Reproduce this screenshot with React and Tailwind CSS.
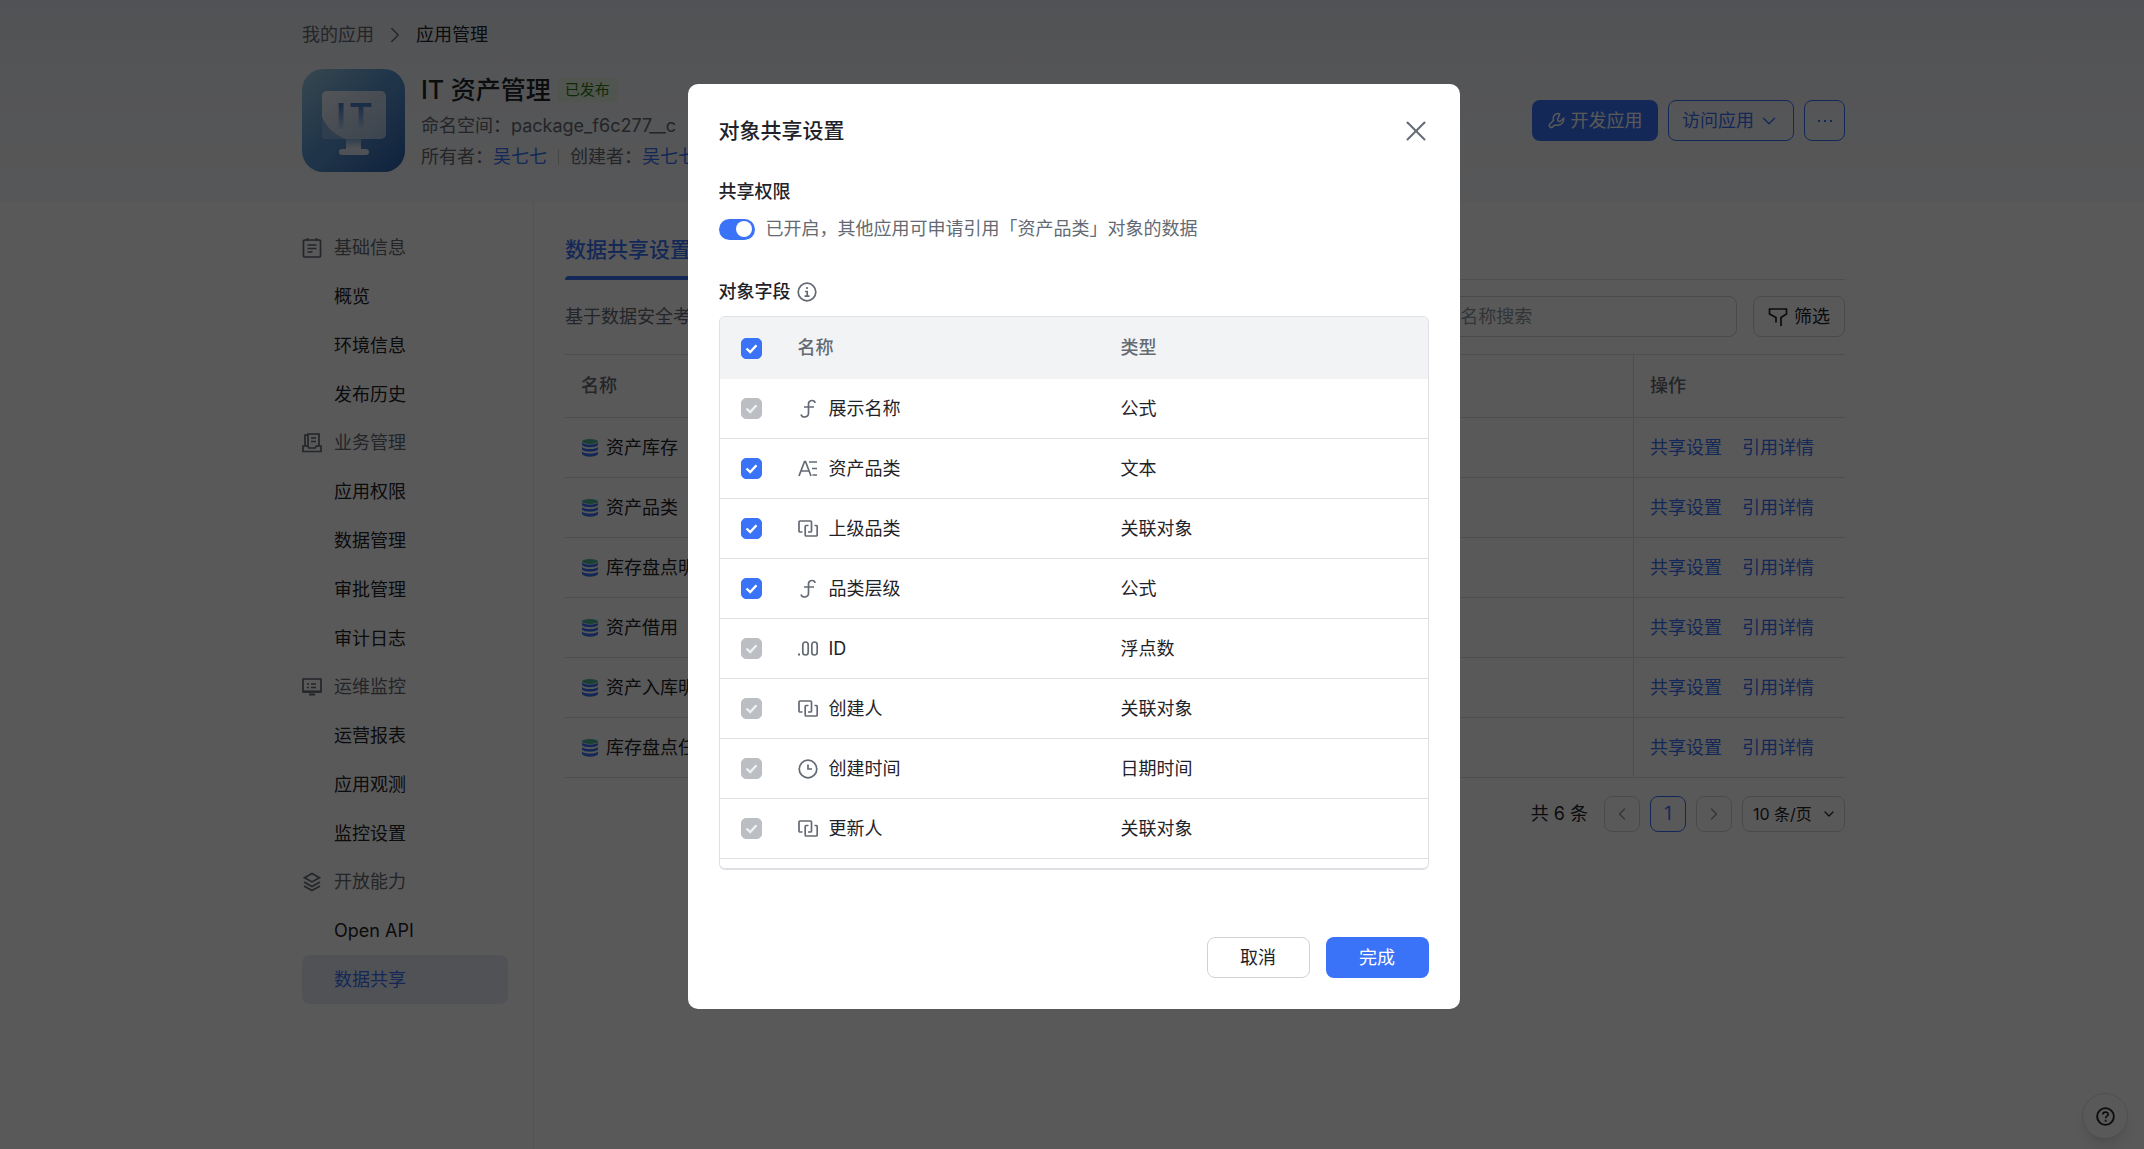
import { useState } from "react";
import { ChevronDown, ChevronLeft, ChevronRight, Search, X } from "lucide-react";

const menuGroups = [
  { title: "基础信息", icon: "note", items: ["概览", "环境信息", "发布历史"] },
  { title: "业务管理", icon: "tray", items: ["应用权限", "数据管理", "审批管理", "审计日志"] },
  { title: "运维监控", icon: "monitor", items: ["运营报表", "应用观测", "监控设置"] },
  { title: "开放能力", icon: "layers", items: ["Open API", "数据共享"] }
];

const sharedObjects = ["资产库存", "资产品类", "库存盘点明细", "资产借用", "资产入库明细", "库存盘点任务"];

const objectFields = [
  { name: "展示名称", type: "公式", icon: "formula", locked: true },
  { name: "资产品类", type: "文本", icon: "text", locked: false },
  { name: "上级品类", type: "关联对象", icon: "relation", locked: false },
  { name: "品类层级", type: "公式", icon: "formula", locked: false },
  { name: "ID", type: "浮点数", icon: "decimal", locked: true },
  { name: "创建人", type: "关联对象", icon: "relation", locked: true },
  { name: "创建时间", type: "日期时间", icon: "clock", locked: true },
  { name: "更新人", type: "关联对象", icon: "relation", locked: true }
];

const iconShapes = {
  note: (
    <>
      <rect x="1.500" y="2" width="17" height="17" rx="1" />
      <path d="M5.500 0v3M14.500 0v3M5.500 7h9M5.500 10.500h9M5.500 14h5" />
    </>
  ),
  tray: (
    <>
      <path d="M3 13V2h3M6 13V1h11v12M9 5h5M9 8.500h5" />
      <path d="M1 13h4.500l1.500 2h6l1.500-2H19v5.500H1z" />
    </>
  ),
  monitor: (
    <>
      <path d="M1 2h18v13H1z" />
      <path d="M1 14.500h18M7 17.500h6" strokeWidth="2" />
      <path d="M5 7h2M9 7h5M5 10.500h2M9 10.500h5" />
    </>
  ),
  layers: <path d="M10 1.500l7.500 4.200-7.500 4.200-7.500-4.200zM2 10l8 4.500 8-4.500M2 14l8 4.500 8-4.500" />,
  formula: <path d="M17 4c0-3.500-6.500-3.500-6.500 1v9c0 5-6.500 5-7.500 1.500M6 8h10" />,
  text: <path d="M1 17L6.500 2.500h1L13 17M3 12h8M11 3h8M14 9.500h5M14.500 16h4.500" />,
  relation: (
    <>
      <path d="M4.500 13H2a1 1 0 0 1-1-1V3a1 1 0 0 1 1-1h10.500a1 1 0 0 1 1 1v9a1 1 0 0 1-1 1H10" />
      <path d="M10.500 6.500H8.200a1 1 0 0 0-1 1V16a1 1 0 0 0 1 1h10a1 1 0 0 0 1-1V7.500a1 1 0 0 0-1-1h-1.700" />
    </>
  ),
  decimal: (
    <>
      <rect x="4.800" y="3" width="5.400" height="13" rx="2.700" />
      <rect x="13.800" y="3" width="5.400" height="13" rx="2.700" />
      <path d="M0 15.500h2" strokeWidth="2" />
    </>
  ),
  clock: (
    <>
      <circle cx="10" cy="10" r="8.800" />
      <path d="M10 5.500V10h4" />
    </>
  ),
  info: (
    <>
      <circle cx="10" cy="10" r="8.800" />
      <path d="M10 5v2M8 9.500h2.200V14M7.500 14.200h5" />
    </>
  ),
  help: (
    <>
      <circle cx="10" cy="10" r="8.800" strokeWidth="2" />
      <path d="M7.200 8c0-3.600 5.800-3.400 5.600-.2-.1 1.800-2.700 1.900-2.700 4M10.100 13.500v2" />
    </>
  ),
  filter: <path d="M8 15.500v-5L1.500 7V2h17v5L13 10.500V19" />,
  wrench: <path d="M13.800 2.200c-3.300-1.200-7 .7-7.600 4.300-.2 1.200 0 2.300.4 3.300l-4.400 4.300c-1 1-1 2.500 0 3.400 1 .9 2.400.9 3.300 0l2-2h3.600c4.300 0 7.800-3.400 7.400-8.200l-3.300 3.100c-1 .9-2.400.9-3.300 0-.9-.9-.9-2.300 0-3.200z" />
};

function Icon({ name, className }) {
  return (
    <svg viewBox="0 0 20 20" fill="none" stroke="currentColor" strokeWidth="1.700" className={className} aria-hidden="true">
      {iconShapes[name]}
    </svg>
  );
}

function DatabaseIcon() {
  return (
    <svg viewBox="0 0 16 18" className="h-[18px] w-4 shrink-0" aria-hidden="true">
      <path d="M0 3.500c2 2.800 14 2.800 16 0V6c-2 3-14 3-16 0z" fill="#3b73f8" />
      <path d="M0 8c2 2.800 14 2.800 16 0v2.500c-2 3-14 3-16 0z" fill="#3b73f8" />
      <path d="M0 12.500c2 2.800 14 2.800 16 0V15c-2 3.500-14 3.500-16 0z" fill="#3b73f8" />
      <ellipse cx="8" cy="2.500" rx="8" ry="2.500" fill="#4fb59a" />
    </svg>
  );
}

function AppLogo() {
  return (
    <svg viewBox="0 0 103 103" className="size-[103px] shrink-0" role="img" aria-label="IT 资产管理">
      <defs>
        <linearGradient id="tile" x1="0" y1="0" x2="1" y2="1">
          <stop offset="0" stopColor="#a0cde0" />
          <stop offset="0.4" stopColor="#659fd8" />
          <stop offset="1" stopColor="#2c62ad" />
        </linearGradient>
        <linearGradient id="screen" x1="0" y1="0" x2="1" y2="1">
          <stop offset="0" stopColor="#eef3f7" />
          <stop offset="1" stopColor="#a9c4e4" />
        </linearGradient>
        <linearGradient id="letters" x1="0" y1="0" x2="0" y2="1">
          <stop offset="0.2" stopColor="#4778cc" />
          <stop offset="0.8" stopColor="#b5d5ec" />
        </linearGradient>
        <linearGradient id="stand" x1="0" y1="0" x2="0" y2="1">
          <stop offset="0" stopColor="#8db4de" />
          <stop offset="1" stopColor="#e6eef6" />
        </linearGradient>
      </defs>
      <rect width="103" height="103" rx="21" fill="url(#tile)" />
      <rect x="20" y="22" width="64" height="48" rx="5" fill="url(#screen)" />
      <path d="M20 47c3 10 11 18 24 23H25a5 5 0 0 1-5-5z" fill="#86afdc" />
      <text y="60" textAnchor="middle" fontFamily="Inter, sans-serif" fontWeight="600" fontSize="36" fill="url(#letters)">
        <tspan x="39">I</tspan>
        <tspan x="59">T</tspan>
      </text>
      <path d="M44 70h15v10H44z" fill="url(#stand)" />
      <rect x="37" y="80" width="30" height="6" rx="3" fill="#dfe9f3" />
    </svg>
  );
}

function Checkbox({ label, checked, disabled = false, onChange }) {
  return (
    <span className="grid size-[21px] place-items-center">
      <input
        type="checkbox"
        aria-label={label}
        checked={checked}
        disabled={disabled}
        onChange={onChange}
        className="col-start-1 row-start-1 size-[21px] appearance-none rounded-[5px] border border-[#bbbfc4] checked:border-[#3b73f8] checked:bg-[#3b73f8] disabled:border-[#bbbfc4] disabled:bg-[#bbbfc4]"
      />
      {checked && (
        <svg viewBox="0 0 21 21" fill="none" strokeWidth="2.400" className={disabled ? "pointer-events-none col-start-1 row-start-1 size-[21px] stroke-[#eff0f1]" : "pointer-events-none col-start-1 row-start-1 size-[21px] stroke-white"}>
          <path d="M5.500 10.500l3.700 3.500 6.300-6.800" />
        </svg>
      )}
    </span>
  );
}

function PageHeader() {
  return (
    <header className="h-[202px] bg-linear-to-b from-[#e8ebf2] via-[#f1f3f7] via-40% to-[#f8f9fc] pl-[3px]">
      <div className="mx-auto max-w-[1543px]">
        <nav className="flex h-[69px] items-center gap-2">
          <a href="#apps" className="text-[#646a73]">我的应用</a>
          <ChevronRight className="size-[26px] text-[#646a73]" strokeWidth={1.3} />
          <span>应用管理</span>
        </nav>
        <div className="flex gap-4">
          <AppLogo />
          <div className="flex-1">
            <div className="flex h-[41px] items-center gap-[6px]">
              <h1 className="text-[25px] font-medium">IT 资产管理</h1>
              <span className="rounded-sm bg-[#e6f2e1] px-2 text-[15px] leading-6 text-[#2f7a10]">已发布</span>
            </div>
            <p className="leading-[31px] text-[#646a73]">命名空间：package_f6c277__c</p>
            <p className="flex items-center leading-[31px] text-[#646a73]">
              所有者：<a href="#owner" className="text-[#3b73f8]">吴七七</a>
              <span className="mx-[11px] h-4 w-px bg-[#c5c8ce]" />
              创建者：<a href="#creator" className="text-[#3b73f8]">吴七七</a>
            </p>
          </div>
          <div className="flex gap-[10px] pt-[31px]">
            <button className="flex h-[41px] w-[126px] items-center justify-center gap-[6px] rounded-lg bg-[#3b73f8] text-white">
              <Icon name="wrench" className="size-[17px]" />
              开发应用
            </button>
            <button className="flex h-[41px] w-[126px] items-center justify-center gap-1 rounded-lg border border-[#3b73f8] text-[#3b73f8]">
              访问应用
              <ChevronDown className="size-[22px]" strokeWidth={1.5} />
            </button>
            <button className="flex size-[41px] items-center justify-center gap-1 rounded-lg border border-[#3b73f8]" aria-label="更多">
              <span className="size-[2px] bg-[#3b73f8]" />
              <span className="size-[2px] bg-[#3b73f8]" />
              <span className="size-[2px] bg-[#3b73f8]" />
            </button>
          </div>
        </div>
      </div>
    </header>
  );
}

function Sidebar() {
  return (
    <aside className="w-[232px] shrink-0 border-r border-[#eceded] pt-[22px] pr-[25px]">
      {menuGroups.map((group) => (
        <section key={group.title}>
          <h2 className="flex h-12 items-center gap-3 text-[#646a73]">
            <Icon name={group.icon} className="size-5" />
            {group.title}
          </h2>
          {group.items.map((item) => (
            <a
              key={item}
              href="#menu"
              className={item === "数据共享" ? "flex h-[49px] items-center rounded-lg bg-[#e7ebf7] pl-8 text-[#3b73f8]" : "flex h-[49px] items-center rounded-lg pl-8"}
            >
              {item}
            </a>
          ))}
        </section>
      ))}
    </aside>
  );
}

function SharedObjects() {
  return (
    <main className="flex-1 pl-[31px]">
      <div className="flex h-[78px] border-b border-[#dee0e3] pt-5">
        <button className="flex h-[58px] flex-col justify-between text-[21px] font-medium text-[#3b73f8]">
          <span className="leading-[56px]">数据共享设置</span>
        </button>
      </div>
      <div className="-mt-1 h-1 w-[126px] rounded-t-sm bg-[#3b73f8]" />
      <div className="flex items-center gap-4 pt-4">
        <p className="flex-1 text-[#646a73]">基于数据安全考虑</p>
        <label className="flex h-[41px] w-[360px] items-center gap-3 rounded-lg border border-[#d0d3d6] px-4 text-[#8f959e]">
          <Search className="size-5" strokeWidth={1.5} />
          <input type="text" placeholder="对象名称搜索" className="w-full outline-none placeholder:text-[#8f959e]" />
        </label>
        <button className="flex h-[41px] w-[92px] items-center justify-center gap-[6px] rounded-lg border border-[#d0d3d6]">
          <Icon name="filter" className="size-5" />
          筛选
        </button>
      </div>
      <table className="mt-[17px] w-full border-separate border-spacing-0 border-t border-[#dee0e3] text-left">
        <thead>
          <tr className="h-[63px] text-[#646a73]">
            <th className="border-b border-[#dee0e3] pl-4 font-medium">名称</th>
            <th className="w-[212px] border-b border-l border-[#dee0e3] pl-4 font-medium">操作</th>
          </tr>
        </thead>
        <tbody>
          {sharedObjects.map((name) => (
            <tr key={name} className="h-[60px]">
              <td className="border-b border-[#dee0e3] pl-[17px]">
                <div className="flex items-center gap-2">
                  <DatabaseIcon />
                  {name}
                </div>
              </td>
              <td className="border-b border-l border-[#dee0e3] pl-4">
                <div className="flex gap-5 text-[#3b73f8]">
                  <a href="#share">共享设置</a>
                  <a href="#reference">引用详情</a>
                </div>
              </td>
            </tr>
          ))}
        </tbody>
      </table>
      <div className="flex items-center justify-end gap-[10px] pt-[18px]">
        <span className="mr-[6px]">共 6 条</span>
        <button className="flex size-9 items-center justify-center rounded-lg border border-[#d0d3d6] text-[#8f959e]" aria-label="上一页">
          <ChevronLeft className="size-5" strokeWidth={1.5} />
        </button>
        <button className="size-9 rounded-lg border border-[#3b73f8] text-[#3b73f8]">1</button>
        <button className="flex size-9 items-center justify-center rounded-lg border border-[#d0d3d6] text-[#8f959e]" aria-label="下一页">
          <ChevronRight className="size-5" strokeWidth={1.5} />
        </button>
        <label className="grid items-center">
          <select className="col-start-1 row-start-1 h-9 w-[103px] appearance-none rounded-lg border border-[#d0d3d6] pl-[10px] text-[16px]" aria-label="每页条数">
            <option>10 条/页</option>
          </select>
          <ChevronDown className="pointer-events-none col-start-1 row-start-1 mr-2 size-4 justify-self-end" strokeWidth={1.8} />
        </label>
      </div>
    </main>
  );
}

function ShareSettingsDialog() {
  const [shared, setShared] = useState(true);
  const [selected, setSelected] = useState(objectFields.map((field) => field.name));

  const toggleField = (name) => {
    setSelected((names) => (names.includes(name) ? names.filter((item) => item !== name) : [...names, name]));
  };

  return (
    <div className="fixed inset-0 flex items-start justify-center bg-black/65 pt-[84px] pl-[3px]">
      <div role="dialog" aria-labelledby="dialog-title" className="w-[772px] rounded-[10px] bg-white p-[31px]">
        <div className="flex h-8 items-center justify-between">
          <h2 id="dialog-title" className="text-[21px] font-medium">对象共享设置</h2>
          <button aria-label="关闭" className="-mr-1 text-[#646a73]">
            <X className="size-[34px]" strokeWidth={1.4} />
          </button>
        </div>

        <h3 className="mt-[31px] leading-7 font-medium">共享权限</h3>
        <label className="mt-[9px] flex h-7 items-center text-[#646a73]">
          <input type="checkbox" role="switch" checked={shared} onChange={() => setShared(!shared)} className="peer sr-only" />
          <span className="mr-[11px] flex h-[21px] w-9 items-center justify-end rounded-full bg-[#bbbfc4] px-[3px] peer-checked:bg-[#3b73f8]">
            <span className="size-4 rounded-full bg-white" />
          </span>
          已开启，其他应用可申请引用「资产品类」对象的数据
        </label>

        <h3 className="mt-[35px] flex items-center gap-[6px] leading-7 font-medium">
          对象字段
          <Icon name="info" className="size-5 text-[#646a73]" />
        </h3>
        <div className="mt-[10px] h-[554px] overflow-y-auto rounded-md border border-b-2 border-[#dee0e3] [scrollbar-width:none]">
          <table className="w-full table-fixed border-separate border-spacing-0 text-left">
            <thead>
              <tr className="h-[62px] bg-[#f2f3f5] text-[#646a73]">
                <th className="w-[78px] pl-[21px]">
                  <Checkbox
                    label="全选"
                    checked={selected.length === objectFields.length}
                    onChange={() => setSelected(objectFields.filter((field) => field.locked || selected.length < objectFields.length).map((field) => field.name))}
                  />
                </th>
                <th className="w-[323px] font-medium">名称</th>
                <th className="font-medium">类型</th>
              </tr>
            </thead>
            <tbody>
              {objectFields.map((field) => (
                <tr key={field.name} className="h-[60px]">
                  <td className="border-b border-[#dee0e3] pl-[21px]">
                    <Checkbox label={field.name} checked={selected.includes(field.name)} disabled={field.locked} onChange={() => toggleField(field.name)} />
                  </td>
                  <td className="border-b border-[#dee0e3]">
                    <div className="flex items-center gap-[11px]">
                      <Icon name={field.icon} className="size-5 text-[#646a73]" />
                      {field.name}
                    </div>
                  </td>
                  <td className="border-b border-[#dee0e3]">{field.type}</td>
                </tr>
              ))}
            </tbody>
          </table>
        </div>

        <div className="mt-[67px] flex justify-end gap-4">
          <button className="h-[41px] w-[103px] rounded-lg border border-[#d0d3d6]">取消</button>
          <button className="h-[41px] w-[103px] rounded-lg bg-[#3b73f8] text-white">完成</button>
        </div>
      </div>
    </div>
  );
}

function App() {
  return (
    <div className="flex min-h-screen flex-col bg-white font-[Inter,'Noto_Sans_CJK_SC',sans-serif] text-[18px] leading-7 text-[#1f2329]">
      <PageHeader />
      <div className="flex flex-1 pl-[3px]">
        <div className="mx-auto flex w-full max-w-[1543px]">
          <Sidebar />
          <SharedObjects />
        </div>
      </div>
      <button aria-label="帮助" className="fixed right-4 bottom-[10px] flex size-[46px] items-center justify-center rounded-full border border-[#dee0e3] bg-white shadow-lg">
        <Icon name="help" className="size-[19px]" />
      </button>
      <ShareSettingsDialog />
    </div>
  );
}

export default App;
